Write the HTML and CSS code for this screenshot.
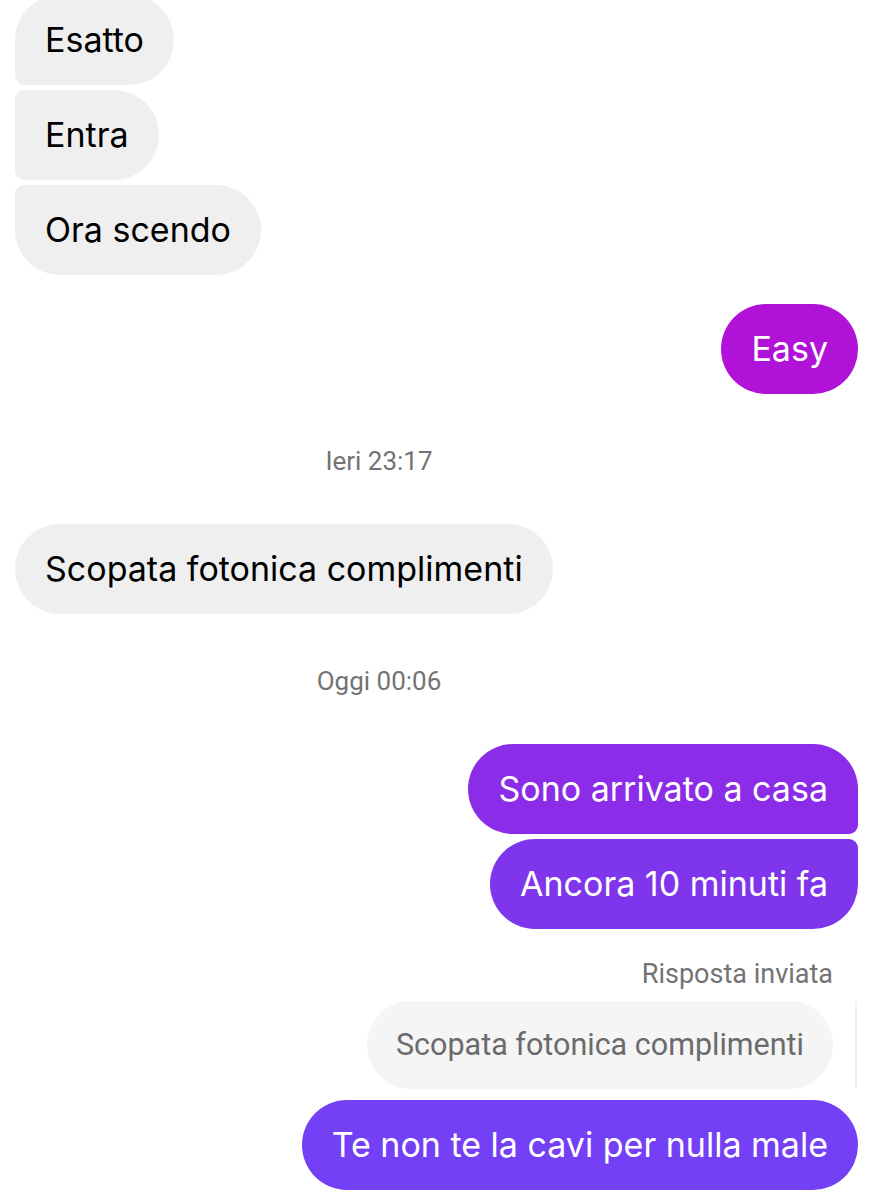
FILE: index.html
```html
<!DOCTYPE html>
<html lang="it">
<head>
<meta charset="utf-8">
<link rel="stylesheet" href="styles.css">
</head>
<body>
<main class="thread">
  <div class="row in"><div class="bubble grey first">Esatto</div></div>
  <div class="row in tight"><div class="bubble grey mid">Entra</div></div>
  <div class="row in tight"><div class="bubble grey last">Ora scendo</div></div>

  <div class="row out gap-md"><div class="bubble easy">Easy</div></div>

  <div class="stamp">Ieri 23:17</div>
  <div class="row in after-stamp"><div class="bubble grey solo">Scopata fotonica complimenti</div></div>

  <div class="stamp">Oggi 00:06</div>
  <div class="row out after-stamp"><div class="bubble sono out-first">Sono arrivato a casa</div></div>
  <div class="row out tight"><div class="bubble ancora out-last">Ancora 10 minuti fa</div></div>

  <div class="reply-label">Risposta inviata</div>
  <div class="quote-row">
    <div class="quote">Scopata fotonica complimenti</div>
    <div class="quote-bar"></div>
  </div>
  <div class="row out reply"><div class="bubble final">Te non te la cavi per nulla male</div></div>
</main>
</body>
</html>
```

FILE: styles.css
```css
html, body {
  margin: 0;
  padding: 0;
  background: #ffffff;
}

.thread {
  display: flex;
  flex-direction: column;
  width: 878px;
  font-family: "Inter", "Noto Sans", sans-serif;
}

.row {
  display: flex;
}

.row.in {
  justify-content: flex-start;
  padding-left: 15px;
}

.row.out {
  justify-content: flex-end;
  padding-right: 20px;
}

.row.in:first-child {
  margin-top: -5px;
}

.row.tight {
  margin-top: 5px;
}

.row.gap-md {
  margin-top: 29px;
}

.row.after-stamp {
  margin-top: 48px;
}

.row.reply {
  margin-top: 11px;
}

.bubble {
  font-size: 34px;
  line-height: 38px;
  padding: 26px 30px;
  border-radius: 45px;
  white-space: nowrap;
}

.bubble.grey {
  background: #efefef;
  color: #000000;
}

.bubble.first {
  border-radius: 45px 45px 45px 9px;
}

.bubble.mid {
  border-radius: 9px 45px 45px 9px;
}

.bubble.last {
  border-radius: 9px 45px 45px 45px;
}

.bubble.easy {
  background: #b012d8;
  color: #ffffff;
}

.bubble.sono {
  background: #8b2ce9;
  color: #ffffff;
}

.bubble.ancora {
  background: #7e35eb;
  color: #ffffff;
}

.bubble.out-first {
  border-radius: 45px 45px 9px 45px;
}

.bubble.out-last {
  border-radius: 45px 9px 45px 45px;
}

.bubble.final {
  background: #7340f6;
  color: #ffffff;
}

.stamp {
  margin-top: 52px;
  width: 758px;
  text-align: center;
  font-family: "Roboto", "Noto Sans", sans-serif;
  font-size: 26px;
  line-height: 30px;
  color: #737373;
}

.reply-label {
  margin-top: 30px;
  align-self: flex-end;
  padding-right: 45px;
  font-family: "Roboto", "Noto Sans", sans-serif;
  font-size: 27px;
  line-height: 30px;
  color: #737373;
}

.quote-row {
  margin-top: 12px;
  display: flex;
  justify-content: flex-end;
  align-items: stretch;
  gap: 22px;
  padding-right: 21px;
}

.quote {
  background: #f5f5f5;
  color: #6b6b6b;
  font-family: "Roboto", "Noto Sans", sans-serif;
  font-size: 30.5px;
  line-height: 34px;
  padding: 27px 29px;
  border-radius: 44px;
  white-space: nowrap;
}

.quote-bar {
  width: 2px;
  background: #eef0ef;
  border-radius: 1px;
}
```
